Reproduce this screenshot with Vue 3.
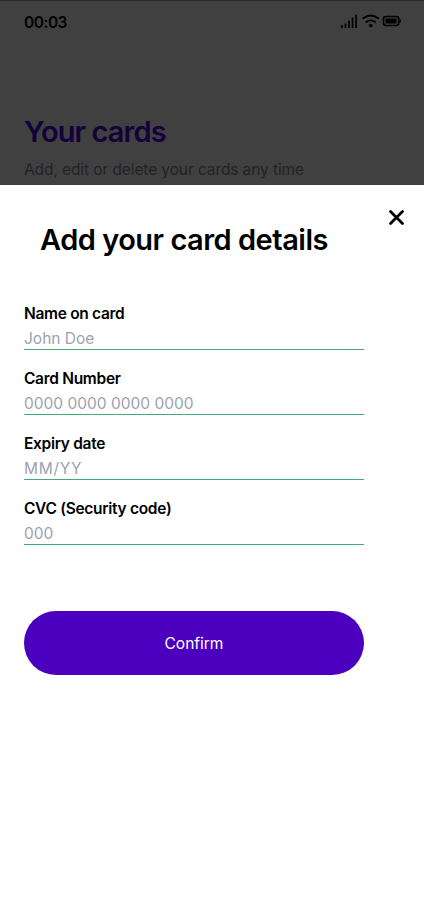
<script setup>
const fields = [
  { id: 'name', label: 'Name on card', placeholder: 'John Doe' },
  { id: 'number', label: 'Card Number', placeholder: '0000 0000 0000 0000' },
  { id: 'expiry', label: 'Expiry date', placeholder: 'MM/YY' },
  { id: 'cvc', label: 'CVC (Security code)', placeholder: '000' },
]
</script>

<template>
  <main class="screen">
    <header class="backdrop">
      <div class="status">
        <span class="time">00:03</span>
        <svg class="status-icons" width="62" height="16" viewBox="0 0 62 16">
          <g fill="#000">
            <rect x="1" y="11" width="1.700" height="3" rx=".6" />
            <rect x="4.600" y="9.500" width="1.700" height="4.500" rx=".6" />
            <rect x="8.200" y="6.500" width="1.700" height="7.500" rx=".6" />
            <rect x="11.700" y="3.500" width="1.700" height="10.500" rx=".6" />
            <rect x="15.200" y="0.500" width="1.700" height="13.500" rx=".6" />
            <circle cx="30.700" cy="11.600" r="1.800" />
            <rect x="45.500" y="4.500" width="11" height="5" />
            <path d="M59.500 5q1.500 0 1.500 2t-1.500 2z" />
          </g>
          <g fill="none" stroke="#000" stroke-width="1.800" stroke-linecap="round">
            <path d="M23.200 4.300Q30.700-1.300 38.200 4.300" />
            <path d="M26.300 8Q30.700 4.700 35.100 8" />
            <rect x="43.500" y="2.500" width="15.200" height="9" rx="2.500" stroke-width="1.600" />
          </g>
        </svg>
      </div>
      <h1 class="heading">Your cards</h1>
      <p class="subtitle">Add, edit or delete your cards any time</p>
    </header>

    <section class="sheet">
      <div class="sheet-head">
        <h2 class="title">Add your card details</h2>
        <button class="close" type="button" aria-label="Close">
          <svg width="17" height="17" viewBox="0 0 17 17">
            <path d="M2.500 2.500 14.500 14.500M14.500 2.500 2.500 14.500" stroke="#000" stroke-width="2.800" stroke-linecap="round" />
          </svg>
        </button>
      </div>
      <form class="form">
        <div v-for="f in fields" :key="f.id" class="field" :class="f.id">
          <label :for="f.id">{{ f.label }}</label>
          <input :id="f.id" type="text" :placeholder="f.placeholder" />
        </div>
        <button class="confirm" type="button">Confirm</button>
      </form>
    </section>
  </main>
</template>

<style>
body { background: #fff; }
</style>

<style scoped>
.screen {
  width: 424px;
  height: 921px;
  overflow: hidden;
  background: #fff;
  font-family: Inter, "Liberation Sans", sans-serif;
  color: #000;
}
.screen * { box-sizing: border-box; }
.backdrop {
  height: 185px;
  background: #404040;
  border-top: 1px solid #2b2b2d;
  padding: 0 22px 0 24px;
  overflow: hidden;
}
.status {
  display: flex;
  justify-content: space-between;
  align-items: flex-start;
  padding-top: 11px;
  height: 112px;
}
.time { font-size: 15.5px; font-weight: 600; line-height: 20px; letter-spacing: -0.5px; padding-top: 1px; }
.status-icons { display: block; margin-top: 2px; }
.heading {
  margin: 0;
  font-size: 29px;
  line-height: 38px;
  font-weight: 600;
  letter-spacing: -0.9px;
  color: #14003a;
  white-space: nowrap;
}
.subtitle {
  margin: 9px 0 0;
  font-size: 15.5px;
  line-height: 20px;
  letter-spacing: -0.1px;
  color: #222327;
  white-space: nowrap;
}
.sheet { height: 736px; }
.sheet-head {
  display: flex;
  justify-content: space-between;
  align-items: flex-start;
  height: 116px;
  padding: 24px 19px 0 40px;
}
.title {
  margin: 12px 0 0;
  font-size: 29px;
  line-height: 38px;
  font-weight: 600;
  letter-spacing: -0.5px;
  white-space: nowrap;
}
.close { padding: 0; border: 0; background: none; width: 17px; height: 17px; }
.close svg { display: block; }
.form {
  display: flex;
  flex-direction: column;
  width: 364px;
  padding-left: 24px;
}
.field {
  display: flex;
  flex-direction: column;
  height: 49px;
  margin-bottom: 16px;
  border-bottom: 1px solid #45aa72;
}
label {
  font-size: 15.5px;
  line-height: 24px;
  height: 24px;
  padding-top: 1px;
  font-weight: 600;
  letter-spacing: -0.3px;
  white-space: nowrap;
}
input {
  width: 100%;
  height: 24px;
  padding: 2px 0 0;
  border: 0;
  outline: 0;
  background: none;
  font: 400 15.5px/22px Inter, "Liberation Sans", sans-serif;
}
input::placeholder { color: #9ca3af; opacity: 1; }
.expiry input { letter-spacing: 0.7px; }
.confirm {
  height: 64px;
  margin-top: 50px;
  padding: 2px 0 0;
  border: 0;
  border-radius: 32px;
  background: #4b00bf;
  color: #fff;
  font: 400 15.5px/24px Inter, "Liberation Sans", sans-serif;
}
</style>
